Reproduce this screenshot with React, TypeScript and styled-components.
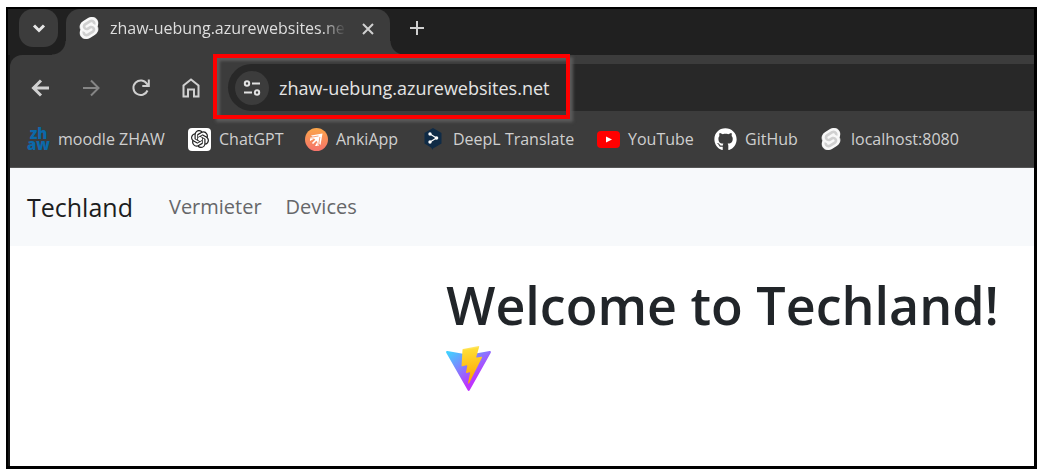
import React from "react";
import styled, { createGlobalStyle } from "styled-components";
import { FaGithub } from "react-icons/fa";
import { SiOpenai, SiSvelte } from "react-icons/si";

const GlobalStyle = createGlobalStyle`
  * { box-sizing: border-box; }
  body { margin: 0; padding: 7px 5px 4px 6px; background: #fff; font-family: "Open Sans", "Noto Sans", sans-serif; }
  button { border: 0; padding: 0; background: none; color: inherit; font: inherit; }
  a { color: inherit; text-decoration: none; }
`;

const Frame = styled.div`
  display: flex;
  flex-direction: column;
  min-height: calc(100vh - 11px);
  border: 2px solid #000;
  border-width: 2px 3px 3px 2px;
  background: #202020;
  overflow: hidden;
`;

const TabStrip = styled.div`
  display: flex;
  align-items: flex-start;
  height: 46px;
  padding-left: 11px;
`;

const TabSearch = styled.button`
  display: grid;
  place-items: center;
  width: 39px;
  height: 38px;
  margin-right: 8px;
  border-radius: 14px;
  background: #3c3c3c;
  color: #e6e6e6;
`;

const Tab = styled.div`
  position: relative;
  display: flex;
  align-items: center;
  width: 324px;
  height: 46px;
  padding: 0 14px 8px 12px;
  border-radius: 14px 14px 0 0;
  background: #3c3c3c;
  color: #dedede;

  &::before,
  &::after {
    content: "";
    position: absolute;
    bottom: 0;
    width: 14px;
    height: 14px;
  }
  &::before {
    right: 100%;
    background: radial-gradient(circle at 0 0, transparent 13px, #3c3c3c 14px);
  }
  &::after {
    left: 100%;
    background: radial-gradient(circle at 100% 0, transparent 13px, #3c3c3c 14px);
  }
`;

const TabTitle = styled.span`
  flex: 1;
  margin: 0 12px 0 10px;
  font-size: 16px;
  line-height: 24px;
  white-space: nowrap;
  overflow: hidden;
  mask-image: linear-gradient(to right, #000 90%, transparent);
`;

const IconButton = styled.button<{ $size?: number; $dim?: boolean }>`
  display: grid;
  place-items: center;
  flex: none;
  width: ${(p) => p.$size ?? 26}px;
  height: ${(p) => p.$size ?? 26}px;
  color: ${(p) => (p.$dim ? "#858585" : "#d0d0d0")};
`;

const NewTab = styled(IconButton)`
  margin: 6px 0 0 14px;
`;

const Browser = styled.div`
  display: flex;
  flex: 1;
  flex-direction: column;
  border-left: 2px solid #161616;
`;

const Toolbar = styled.div`
  display: flex;
  align-items: center;
  padding: 9px 0 9px 18px;
  border-top-left-radius: 12px;
  background: #3c3c3c;
`;

const NavButtons = styled.div`
  display: flex;
  gap: 24px;
  margin-right: 24px;
`;

const Omnibox = styled.div`
  position: relative;
  display: flex;
  flex: 1;
  align-items: center;
  height: 47px;
  padding-left: 7px;
  border-radius: 24px 0 0 24px;
  background: #282828;
`;

const SiteInfo = styled.button`
  display: grid;
  place-items: center;
  flex: none;
  width: 34px;
  height: 34px;
  margin-right: 10px;
  border-radius: 50%;
  background: #3c3c3c;
  color: #e2e2e2;
`;

const UrlInput = styled.input`
  flex: 1;
  min-width: 0;
  padding: 0;
  border: 0;
  outline: 0;
  background: transparent;
  color: #e4e4e4;
  font: 18px/28px "Open Sans", "Noto Sans", sans-serif;
`;

const Highlight = styled.div`
  position: absolute;
  top: -10px;
  left: -15px;
  width: 357px;
  height: 65px;
  border: 4px solid #fe0000;
  box-shadow: 3px 3px 3px #5c5c5c, inset 3px 3px 3px #5c5c5c;
  pointer-events: none;
`;

const Bookmarks = styled.nav`
  display: flex;
  height: 48px;
  padding: 0 0 9px 17px;
  background: #3c3c3c;
  border-bottom: 1px solid #555;
`;

const Bookmark = styled.a<{ $width: number }>`
  display: flex;
  align-items: center;
  gap: 9px;
  flex: none;
  width: ${(p) => p.$width}px;
  color: #cfcfcf;
  font-size: 16px;
  line-height: 24px;
  white-space: nowrap;
`;

const Favicon = styled.span`
  display: grid;
  place-items: center;
  flex: none;
  width: 22px;
  height: 24px;
  color: #fff;
`;

const ZhawMark = styled.span`
  display: grid;
  justify-items: center;
  color: #0b69a9;
  font: 800 15px/11px "Open Sans", sans-serif;
`;

const OpenAiTile = styled.span`
  display: grid;
  place-items: center;
  width: 23px;
  height: 23px;
  border-radius: 4px;
  background: #fff;
  color: #222;
`;

const SiteNav = styled.nav`
  display: flex;
  align-items: center;
  gap: 24px;
  height: 78px;
  padding: 0 18px 0 17px;
  background: #f7f9fb;
  color: #666769;
  font-size: 20px;
  line-height: 32px;
`;

const Brand = styled.a`
  margin-right: 12px;
  color: #1c1d20;
  font-size: 25px;
  line-height: 36px;
`;

const Main = styled.main`
  flex: 1;
  padding: 26px 0 24px 42.6%;
  background: #fff;
`;

const Title = styled.h1`
  margin: 0 0 8px;
  color: #212529;
  font-size: 52px;
  font-weight: 600;
  line-height: 66px;
  white-space: nowrap;
`;

const SvelteIcon = ({ size }: { size: number }) => (
  <svg width={size} height={size} viewBox="0 0 24 24" aria-hidden="true">
    <path d="M6 5 14 .5a6 6 0 0 1 7 9 6 6 0 0 1-3 9.500L10 23.500a6 6 0 0 1-7-9A6 6 0 0 1 6 5Z" fill="#d0d0d0" />
    <SiSvelte size={24} color="#f8f8f8" />
  </svg>
);

const ViteLogo = () => (
  <svg width="45" height="45" viewBox="0 0 256 257" role="img" aria-label="Vite">
    <defs>
      <linearGradient id="vite-body" x1="-.8%" x2="57.600%" y1="7.700%" y2="78.400%">
        <stop offset="0%" stopColor="#41D1FF" />
        <stop offset="100%" stopColor="#BD34FE" />
      </linearGradient>
      <linearGradient id="vite-bolt" x1="43.400%" x2="50.300%" y1="2.200%" y2="89%">
        <stop offset="0%" stopColor="#FFEA83" />
        <stop offset="8.300%" stopColor="#FFDD35" />
        <stop offset="100%" stopColor="#FFA800" />
      </linearGradient>
    </defs>
    <path fill="url(#vite-body)" d="M255.153 37.938L134.897 252.976c-2.483 4.44-8.862 4.466-11.382.048L.875 37.958c-2.746-4.814 1.371-10.646 6.827-9.67l120.385 21.517a6.537 6.537 0 0 0 2.322-.004l117.867-21.483c5.438-.991 9.574 4.796 6.877 9.62Z" />
    <path fill="url(#vite-bolt)" d="M185.432.063L96.44 17.501a3.268 3.268 0 0 0-2.634 3.014l-5.474 92.456a3.268 3.268 0 0 0 3.997 3.378l24.777-5.718c2.318-.535 4.413 1.507 3.936 3.838l-7.361 36.047c-.495 2.426 1.782 4.5 4.151 3.78l15.304-4.649c2.372-.72 4.652 1.36 4.15 3.788l-11.698 56.621c-.732 3.542 3.979 5.473 5.943 2.437l1.313-2.028l72.516-144.72c1.215-2.423-.88-5.186-3.54-4.672l-25.505 4.922c-2.396.462-4.435-1.77-3.759-4.114l16.646-57.705c.677-2.35-1.37-4.583-3.769-4.113Z" />
  </svg>
);

const AnkiIcon = () => (
  <svg width="23" height="23" viewBox="0 0 23 23" aria-hidden="true">
    <defs>
      <linearGradient id="anki" x1="0" y1="0" x2="0" y2="1">
        <stop offset="0" stopColor="#fba64a" />
        <stop offset="1" stopColor="#f5736b" />
      </linearGradient>
    </defs>
    <circle cx="11.500" cy="11.500" r="11.500" fill="url(#anki)" />
    <path d="M6 7.500 17.500 5.500 15.500 17l-3-3Z" fill="#fff" />
    <path d="M5 10.500h4.500L5 13ZM12.500 13.500V18L10 18Z" fill="#fff" />
    <path d="m5.500 10 5-1M13 17.500l1-5.500M7.500 15.500l6-6" stroke="#fff" strokeWidth="1.600" />
    <path d="m5.500 9.300 8-1.300M13.600 17l1.300-8" stroke="#f58a5c" strokeWidth=".8" />
  </svg>
);

const DeepLIcon = () => (
  <svg width="18" height="22" viewBox="0 0 18 22" aria-hidden="true">
    <path d="M9 0 17.500 5v10.500L9 20.500V22l-2-2.500L.5 15.500V5Z" fill="#0f2b46" />
    <path d="m6 6 6.500 4L6 14" fill="none" stroke="#fff" strokeWidth="1.200" />
    <circle cx="6" cy="6" r="1.700" fill="#fff" />
    <circle cx="12.500" cy="10" r="1.800" fill="#fff" />
    <circle cx="6" cy="14" r="1.700" fill="#fff" />
  </svg>
);

const YouTubeIcon = () => (
  <svg width="23" height="17" viewBox="0 0 23 17" aria-hidden="true">
    <rect width="23" height="17" rx="4" fill="#f00" />
    <path d="M9 5.500v6l6-3Z" fill="#fff" />
  </svg>
);

const Stroke = ({ d, size = 20, width = 2 }: { d: string; size?: number; width?: number }) => (
  <svg width={size} height={size} viewBox="0 0 20 20" fill="none" stroke="currentColor" strokeWidth={width} aria-hidden="true">
    <path d={d} />
  </svg>
);

const bookmarks = [
  { label: "moodle ZHAW", width: 161, icon: <ZhawMark aria-hidden="true"><span>zh</span><span>aw</span></ZhawMark> },
  { label: "ChatGPT", width: 117, icon: <OpenAiTile><SiOpenai size={18} /></OpenAiTile> },
  { label: "AnkiApp", width: 117, icon: <AnkiIcon /> },
  { label: "DeepL Translate", width: 175, icon: <DeepLIcon /> },
  { label: "YouTube", width: 117, icon: <YouTubeIcon /> },
  { label: "GitHub", width: 106, icon: <FaGithub size={23} /> },
  { label: "localhost:8080", width: 140, icon: <SvelteIcon size={22} /> },
];

export default function App() {
  return (
    <>
      <GlobalStyle />
      <Frame>
        <TabStrip>
          <TabSearch aria-label="Search tabs">
            <Stroke d="m5 7.500 5 5 5-5" width={3} />
          </TabSearch>
          <Tab>
            <SvelteIcon size={22} />
            <TabTitle>zhaw-uebung.azurewebsites.net</TabTitle>
            <IconButton $size={18} aria-label="Close tab">
              <Stroke d="M5 5l10 10M15 5 5 15" />
            </IconButton>
          </Tab>
          <NewTab aria-label="New tab">
            <Stroke d="M10 3v14M3 10h14" />
          </NewTab>
        </TabStrip>
        <Browser>
          <Toolbar>
            <NavButtons>
              <IconButton aria-label="Back">
                <Stroke d="M18 10H3M10 2.500 2.500 10l7.500 7.500" width={3} />
              </IconButton>
              <IconButton $dim aria-label="Forward">
                <Stroke d="M2 10h15M10 2.500l7.500 7.500-7.500 7.500" />
              </IconButton>
              <IconButton aria-label="Reload">
                <Stroke d="M16.500 12.500A7.300 7.300 0 1 1 16 6l1 1.500M17.800 1.500V8h-6.500" />
              </IconButton>
              <IconButton aria-label="Home">
                <Stroke d="M2.500 18.500V7.500L10 1.500l7.500 6v11H13v-7H7v7Z" />
              </IconButton>
            </NavButtons>
            <Omnibox>
              <SiteInfo aria-label="View site information">
                <svg width="18" height="18" viewBox="0 0 18 18" fill="none" stroke="currentColor" strokeWidth="2" aria-hidden="true">
                  <circle cx="4" cy="4.500" r="2.200" />
                  <path d="M9 4.500h8M1 13.500h8" />
                  <circle cx="14" cy="13.500" r="2.200" />
                </svg>
              </SiteInfo>
              <UrlInput aria-label="Address" defaultValue="zhaw-uebung.azurewebsites.net" />
              <Highlight />
            </Omnibox>
          </Toolbar>
          <Bookmarks aria-label="Bookmarks">
            {bookmarks.map((b) => (
              <Bookmark key={b.label} href="#" $width={b.width}>
                <Favicon>{b.icon}</Favicon>
                {b.label}
              </Bookmark>
            ))}
          </Bookmarks>
          <SiteNav aria-label="Site">
            <Brand href="#">Techland</Brand>
            <a href="#">Vermieter</a>
            <a href="#">Devices</a>
          </SiteNav>
          <Main>
            <Title>Welcome to Techland!</Title>
            <ViteLogo />
          </Main>
        </Browser>
      </Frame>
    </>
  );
}
